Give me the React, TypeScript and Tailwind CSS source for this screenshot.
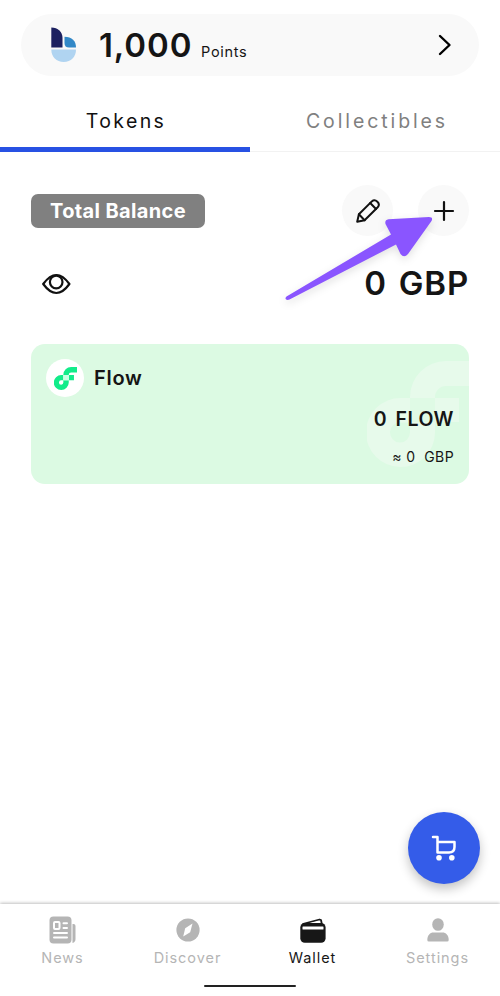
import type { ReactNode } from "react";

function FlowMark({ className, color, square }: { className: string; color: string; square: string }) {
  return (
    <svg viewBox="0 0 106 106" className={className} aria-hidden="true">
      <g fill={color}>
        <path d="M43 37H34A34.5 34.5 0 1 0 68 71.500V61H43V71.500A10 10 0 1 1 34 61.500H43Z" />
        <path d="M43 37V36A36 36 0 0 1 79 0H106V25H79A11 11 0 0 0 68 36V37Z" />
        <path d="M68 37H92V61H68Z" />
      </g>
      <path d="M43 37H68V61H43Z" fill={square} />
    </svg>
  );
}

function NavItem({ label, active, children }: { label: string; active?: boolean; children: ReactNode }) {
  return (
    <div className={`flex flex-1 flex-col items-center ${active ? "text-[#171717]" : "text-[#b5b5b5]"}`}>
      <div className="flex h-[30px] items-center justify-center">{children}</div>
      <span className="mt-[3px] text-[14.5px] leading-5 tracking-[0.95px]">{label}</span>
    </div>
  );
}

export default function App() {
  return (
    <div className="relative flex h-[996px] w-[500px] flex-col overflow-hidden bg-white font-['Inter','Liberation_Sans',sans-serif] text-[#151515]">
      <header className="mx-[21px] mt-[14px] flex h-[62px] shrink-0 items-center rounded-full bg-[#f9f9f9]">
        <svg width="26" height="36" viewBox="0 0 26 36" className="ml-[30px]">
          <path d="M.3.5C7 .5 11.500 5 11.500 11V20.500H.3Z" fill="#1c2060" />
          <path d="M13.500 9.800C21 9.800 25 14 25 20.500H18C15 20.500 13.500 19 13.500 16Z" fill="#3288c7" />
          <path d="M.3 22.500H25C25 30 20 35 12.700 35S.3 30 .3 22.500Z" fill="#b0d4f1" />
        </svg>
        <div className="ml-[22px] flex items-baseline">
          <span className="w-[102px] text-[33px] leading-10 font-semibold tracking-[0.9px]">1,000</span>
          <span className="text-[14.5px] tracking-[0.7px]">Points</span>
        </div>
        <svg width="14" height="22" viewBox="0 0 14 22" fill="none" stroke="#000" strokeWidth="2.400" strokeLinecap="round" strokeLinejoin="round" className="mr-[27px] ml-auto">
          <path d="m2 2 9.500 9L2 20" />
        </svg>
      </header>

      <nav className="mt-[14px] flex h-[62px] shrink-0 text-[19.5px] leading-6">
        <div className="flex w-[250px] justify-center border-b-[5px] border-[#2851e3] pt-[19px] pl-[2px] tracking-[2.4px] text-[#111]">Tokens</div>
        <div className="flex flex-1 justify-center border-b border-[#f2f2f2] pt-[19px] pl-[4px] tracking-[2.9px] text-[#808080]">Collectibles</div>
      </nav>

      <main className="flex flex-1 flex-col px-[31px]">
        <div className="mt-[33px] flex h-[51px] items-center">
          <h1 className="flex h-[34px] w-[174px] items-center justify-center rounded-[7px] bg-[#808080] text-[20px] font-bold tracking-[0.35px] text-white">Total Balance</h1>
          <div className="ml-auto flex gap-[25px]">
            <div className="flex size-[51px] items-center justify-center rounded-full bg-[#f9f9f9]">
              <svg width="24" height="24" viewBox="0 0 24 24" fill="none" stroke="#111" strokeWidth="2" strokeLinejoin="round" strokeLinecap="round">
                <path d="M1.200 22.700 2.900 15.200 15.800 2.400C19.500-.8 25 4.700 21.700 8.200L8.600 21.200Z" />
                <path d="m2.900 15.200 5.700 6M14.200 4l5.800 6" />
              </svg>
            </div>
            <div className="flex size-[51px] items-center justify-center rounded-full bg-[#f9f9f9]">
              <svg width="22" height="22" viewBox="0 0 22 22" stroke="#111" strokeWidth="2.200" strokeLinecap="round"><path d="M11 2v18M2 11h18" /></svg>
            </div>
          </div>
        </div>

        <div className="mt-[25px] flex h-[44px] items-center justify-between">
          <svg width="29" height="22" viewBox="0 0 29 22" fill="none" stroke="#111" strokeWidth="2.200" className="mt-[2px] ml-[11px]">
            <path d="M1.200 11Q14.400-7 27.400 11Q14.400 29 1.200 11Z" strokeLinejoin="round" />
            <circle cx="14.200" cy="9" r="6.300" />
          </svg>
          <span className="text-[33px] leading-10 font-semibold tracking-[0.8px] [word-spacing:3px]">0 GBP</span>
        </div>

        <section className="relative mt-[39px] flex h-[140px] flex-col overflow-hidden rounded-[14px] bg-[#dcfae3]">
          <FlowMark className="absolute top-[17px] left-[336px] size-[106px]" color="#e7faeb" square="#dffae5" />
          <div className="mt-[15px] ml-[15px] flex items-center">
            <div className="flex size-[38px] items-center justify-center rounded-full bg-white">
              <FlowMark className="size-[23px]" color="#12ec8a" square="#c8ffe2" />
            </div>
            <span className="ml-[10px] text-[20px] font-semibold tracking-[0.7px]">Flow</span>
          </div>
          <div className="relative mt-[8px] mr-[15px] text-right text-[19.5px] leading-7 font-semibold tracking-[0.5px] [word-spacing:3px]">0 FLOW</div>
          <div className="relative mt-[14px] mr-[15px] text-right text-[14px] leading-5 tracking-[0.4px] whitespace-pre">≈ 0  GBP</div>
        </section>
      </main>

      <svg className="absolute top-[210px] left-[278px] drop-shadow-[0_3px_4px_rgba(0,0,0,0.12)]" width="166" height="98" viewBox="0 0 166 98">
        <path d="M8.500 86.500 113 24.500 107.500 14Q106.500 10 110.500 9.300L151 7Q155.500 7 153.500 11L130 44Q126 48.500 122.500 44L118 34.500 11.500 89.500C8.500 91 6 88.500 8.500 86.500Z" fill="#8a55ff" />
      </svg>

      <button className="absolute top-[812px] left-[408px] flex size-[72px] items-center justify-center rounded-full bg-[#345ce9] shadow-[0_5px_11px_rgba(0,0,0,0.24)]" aria-label="Cart">
        <svg width="26" height="26" viewBox="0 0 26 26" fill="none" stroke="#fff" strokeWidth="2.500" strokeLinecap="round" strokeLinejoin="round">
          <path d="M2 2h4.500v15.500h11.500q5.500 0 5.500-5.500V7H6.500" />
          <circle cx="8" cy="22.800" r="2.800" fill="#fff" stroke="none" />
          <circle cx="20.800" cy="22.800" r="2.800" fill="#fff" stroke="none" />
        </svg>
      </button>

      <footer className="flex h-[92px] shrink-0 flex-col bg-white shadow-[0_-1px_3px_rgba(0,0,0,0.25)]">
        <div className="flex pt-[11px]">
          <NavItem label="News">
            <svg width="27" height="28" viewBox="0 0 27 28">
              <rect x=".5" y=".5" width="22" height="27" rx="4" fill="currentColor" />
              <path d="M23.500 8h1q2 0 2 2v13q0 3-3 4Z" fill="currentColor" />
              <g stroke="#fff" strokeWidth="2" fill="none" strokeLinecap="round">
                <rect x="5" y="6" width="5.500" height="7" rx="1" />
                <path d="M14.500 7.200h3.500M14.500 12h3.500M5 17h13M5 21.500h13" />
              </g>
            </svg>
          </NavItem>
          <NavItem label="Discover">
            <svg width="24" height="24" viewBox="0 0 24 24">
              <circle cx="12" cy="12" r="11.600" fill="currentColor" />
              <path d="m16.500 5.500-2.300 8.700-7 4.300 2-8.300Z" fill="#fff" />
            </svg>
          </NavItem>
          <NavItem label="Wallet" active>
            <svg width="26" height="25" viewBox="0 0 26 25">
              <path d="m2.500 6 17-4.500 1.500.5.800 4" fill="none" stroke="currentColor" strokeWidth="1.800" strokeLinejoin="round" />
              <path d="m11 5 8-2.100.8 2.600Z" fill="#fff" />
              <rect x=".3" y="5" width="25.300" height="19.700" rx="4.500" fill="currentColor" />
              <rect x="2.500" y="8.500" width="21" height="3" rx=".5" fill="#fff" />
            </svg>
          </NavItem>
          <NavItem label="Settings">
            <svg width="22" height="24" viewBox="0 0 22 24" fill="currentColor">
              <ellipse cx="11" cy="6.500" rx="5.800" ry="6.300" />
              <path d="M.3 22c0-5 3-7.500 6-7.500h9.400c3 0 6 2.500 6 7.500q0 1.500-1.500 1.500H1.800Q.3 23.500.3 22Z" />
            </svg>
          </NavItem>
        </div>
        <div className="mx-auto mt-[17px] h-[2px] w-[92px] rounded-full bg-[#222]" />
      </footer>
    </div>
  );
}
